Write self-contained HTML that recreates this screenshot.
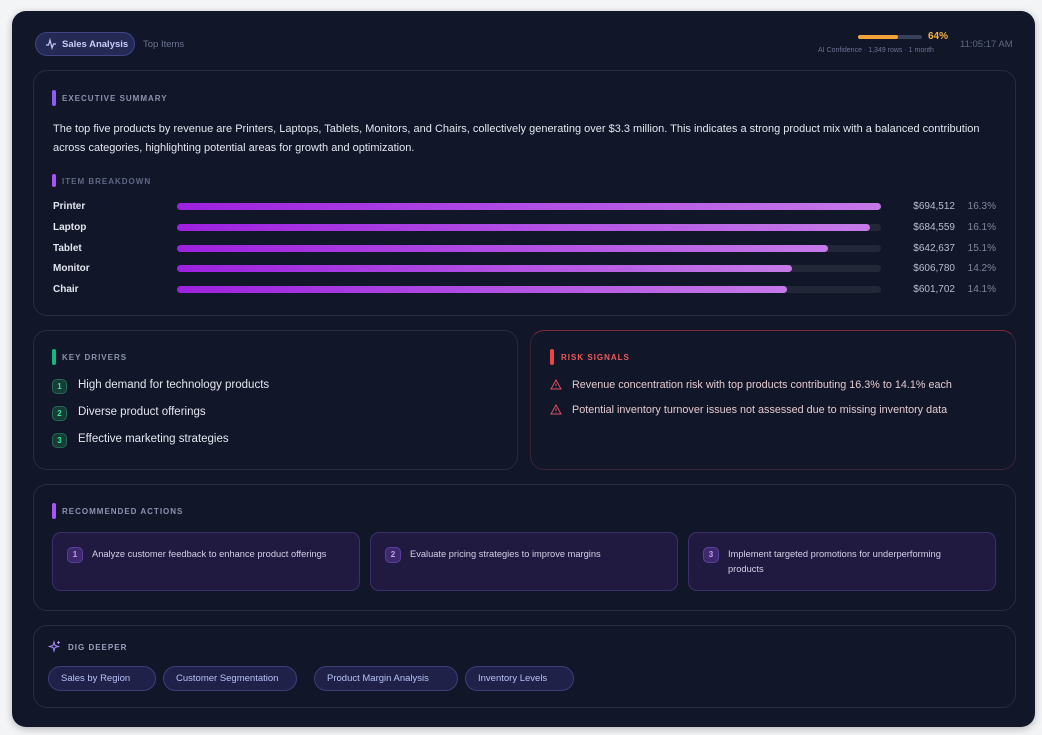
<!DOCTYPE html>
<html><head><meta charset="utf-8"><style>
*{box-sizing:border-box;margin:0;padding:0}
body{width:1042px;height:735px;background:#f3f4f6;font-family:"Liberation Sans","DejaVu Sans",sans-serif;position:relative;overflow:hidden}
.card{position:absolute;left:12px;top:11px;width:1023px;height:716px;background:#121629;border-radius:14px;box-shadow:0 2px 8px rgba(0,0,0,.25)}
.a{position:absolute}
.panel{position:absolute;border:1px solid #272c42;border-radius:14px;background:#121629}
.h{position:absolute;font-size:8px;font-weight:bold;letter-spacing:1px;color:#8b93ad}
.bar{position:absolute;width:4px;height:16px;border-radius:2px}
.lbl{position:absolute;left:53px;font-size:10px;font-weight:bold;color:#e2e6f0}
.track{position:absolute;left:177px;width:704px;height:7px;border-radius:4px;background:#232839}
.fill{height:7px;border-radius:4px;background:linear-gradient(90deg,#9d21e0,#c57ae8)}
.val{position:absolute;right:87px;font-size:10px;color:#b6bdd0}
.pct{position:absolute;right:46px;font-size:10px;color:#7f879d}
.num{position:absolute;width:15px;height:15px;border-radius:5px;background:#173b36;border:1px solid #1f6b55;color:#4ade9a;font-size:8px;font-weight:bold;text-align:center;line-height:13px}
.dt{position:absolute;left:78px;font-size:11.5px;color:#e2e6f0}
.rt{position:absolute;left:572px;font-size:10.8px;color:#e2c9cf}
.act{position:absolute;top:532px;height:59px;border:1px solid #3a2f6a;border-radius:9px;background:#211a40}
.an{position:absolute;left:14px;top:14px;width:16px;height:16px;border-radius:5px;background:#3d2a6c;border:1px solid #5b3f9c;color:#c89cf6;font-size:8px;font-weight:bold;text-align:center;line-height:14px}
.at{position:absolute;left:39px;top:14px;right:14px;font-size:9.3px;line-height:15px;color:#d4cfe8}
.chip{position:absolute;top:666px;height:25px;border:1px solid #3a3f78;border-radius:13px;background:#1f2148;color:#b9c0f5;font-size:9.5px;line-height:23px;padding:0 12px;white-space:nowrap}
</style></head><body>
<div class="card"></div>
<div class="a" style="left:35px;top:32px;width:100px;height:24px;border:1px solid #3f4585;border-radius:12px;background:#252a55"></div>
<svg class="a" style="left:45px;top:38px" width="12" height="12" viewBox="0 0 12 12"><path d="M1 7 L3.5 7 L5 2 L7 10 L8.5 6 L11 6" fill="none" stroke="#c2c7f5" stroke-width="1.2"/></svg>
<div class="a" style="left:62px;top:39px;font-size:9.5px;font-weight:bold;color:#c8ccf8">Sales Analysis</div>
<div class="a" style="left:143px;top:39px;font-size:9.5px;color:#6b7390">Top Items</div>
<div class="a" style="left:858px;top:35px;width:64px;height:4px;border-radius:2px;background:#39405a"><div style="width:40px;height:4px;border-radius:2px;background:#f2a43a"></div></div>
<div class="a" style="left:928px;top:31px;font-size:10px;font-weight:bold;color:#f2b04a">64%</div>
<div class="a" style="left:818px;top:47px;font-size:7px;color:#6b7390">AI Confidence · 1,349 rows · 1 month</div>
<div class="a" style="left:960px;top:39px;font-size:9.5px;color:#5f6782">11:05:17 AM</div>
<div class="panel" style="left:33px;top:70px;width:983px;height:246px"></div>
<div class="bar" style="left:52px;top:90px;background:#8b5cf6"></div>
<div class="h" style="left:62px;top:94px">EXECUTIVE SUMMARY</div>
<div class="a" style="left:53px;top:120px;width:950px;font-size:11px;line-height:19px;color:#e2e6f0">The top five products by revenue are Printers, Laptops, Tablets, Monitors, and Chairs, collectively generating over $3.3 million. This indicates a strong product mix with a balanced contribution across categories, highlighting potential areas for growth and optimization.</div>
<div class="bar" style="left:52px;top:174px;height:13px;background:#a855f7"></div>
<div class="h" style="left:62px;top:177px;color:#5f6782">ITEM BREAKDOWN</div>
<div class="lbl" style="top:201px">Printer</div><div class="track" style="top:203px"><div class="fill" style="width:704px"></div></div><div class="val" style="top:201px">$694,512</div><div class="pct" style="top:201px">16.3%</div>
<div class="lbl" style="top:222px">Laptop</div><div class="track" style="top:224px"><div class="fill" style="width:693px"></div></div><div class="val" style="top:222px">$684,559</div><div class="pct" style="top:222px">16.1%</div>
<div class="lbl" style="top:243px">Tablet</div><div class="track" style="top:245px"><div class="fill" style="width:651px"></div></div><div class="val" style="top:243px">$642,637</div><div class="pct" style="top:243px">15.1%</div>
<div class="lbl" style="top:263px">Monitor</div><div class="track" style="top:265px"><div class="fill" style="width:615px"></div></div><div class="val" style="top:263px">$606,780</div><div class="pct" style="top:263px">14.2%</div>
<div class="lbl" style="top:284px">Chair</div><div class="track" style="top:286px"><div class="fill" style="width:610px"></div></div><div class="val" style="top:284px">$601,702</div><div class="pct" style="top:284px">14.1%</div>
<div class="panel" style="left:33px;top:330px;width:485px;height:140px"></div>
<div class="bar" style="left:52px;top:349px;background:#10b981"></div>
<div class="h" style="left:62px;top:353px">KEY DRIVERS</div>
<div class="num" style="left:52px;top:379px">1</div><div class="dt" style="top:379px">High demand for technology products</div>
<div class="num" style="left:52px;top:406px">2</div><div class="dt" style="top:406px">Diverse product offerings</div>
<div class="num" style="left:52px;top:433px">3</div><div class="dt" style="top:433px">Effective marketing strategies</div>
<div class="panel" style="left:530px;top:330px;width:486px;height:140px;border-color:#3a2536;border-top-color:#7a2b35"></div>
<div class="bar" style="left:550px;top:349px;background:#ef4444"></div>
<div class="h" style="left:561px;top:353px;color:#ef5a5a">RISK SIGNALS</div>
<svg class="a" style="left:550px;top:379px" width="12" height="11" viewBox="0 0 12 11"><path d="M6 1 L11 10 L1 10 Z M6 4.5 V7 M6 8.2 V8.8" fill="none" stroke="#e0505a" stroke-width="1"/></svg>
<div class="rt" style="top:379px">Revenue concentration risk with top products contributing 16.3% to 14.1% each</div>
<svg class="a" style="left:550px;top:404px" width="12" height="11" viewBox="0 0 12 11"><path d="M6 1 L11 10 L1 10 Z M6 4.5 V7 M6 8.2 V8.8" fill="none" stroke="#e0505a" stroke-width="1"/></svg>
<div class="rt" style="top:404px">Potential inventory turnover issues not assessed due to missing inventory data</div>
<div class="panel" style="left:33px;top:484px;width:983px;height:127px"></div>
<div class="bar" style="left:52px;top:503px;background:#a855f7"></div>
<div class="h" style="left:62px;top:507px">RECOMMENDED ACTIONS</div>
<div class="act" style="left:52px;width:308px"><div class="an">1</div><div class="at">Analyze customer feedback to enhance product offerings</div></div>
<div class="act" style="left:370px;width:308px"><div class="an">2</div><div class="at">Evaluate pricing strategies to improve margins</div></div>
<div class="act" style="left:688px;width:308px"><div class="an">3</div><div class="at" style="right:40px">Implement targeted promotions for underperforming products</div></div>
<div class="panel" style="left:33px;top:625px;width:983px;height:83px"></div>
<svg class="a" style="left:48px;top:640px" width="13" height="13" viewBox="0 0 13 13"><path d="M6 2 L7 5.5 L10.5 6.5 L7 7.5 L6 11 L5 7.5 L1.5 6.5 L5 5.5 Z M10.5 1 V4 M9 2.5 H12" fill="none" stroke="#a78bfa" stroke-width="1"/></svg>
<div class="h" style="left:68px;top:643px;color:#9aa2bb">DIG DEEPER</div>
<div class="chip" style="left:48px;width:108px">Sales by Region</div>
<div class="chip" style="left:163px;width:134px">Customer Segmentation</div>
<div class="chip" style="left:314px;width:144px">Product Margin Analysis</div>
<div class="chip" style="left:465px;width:109px">Inventory Levels</div>
</body></html>
